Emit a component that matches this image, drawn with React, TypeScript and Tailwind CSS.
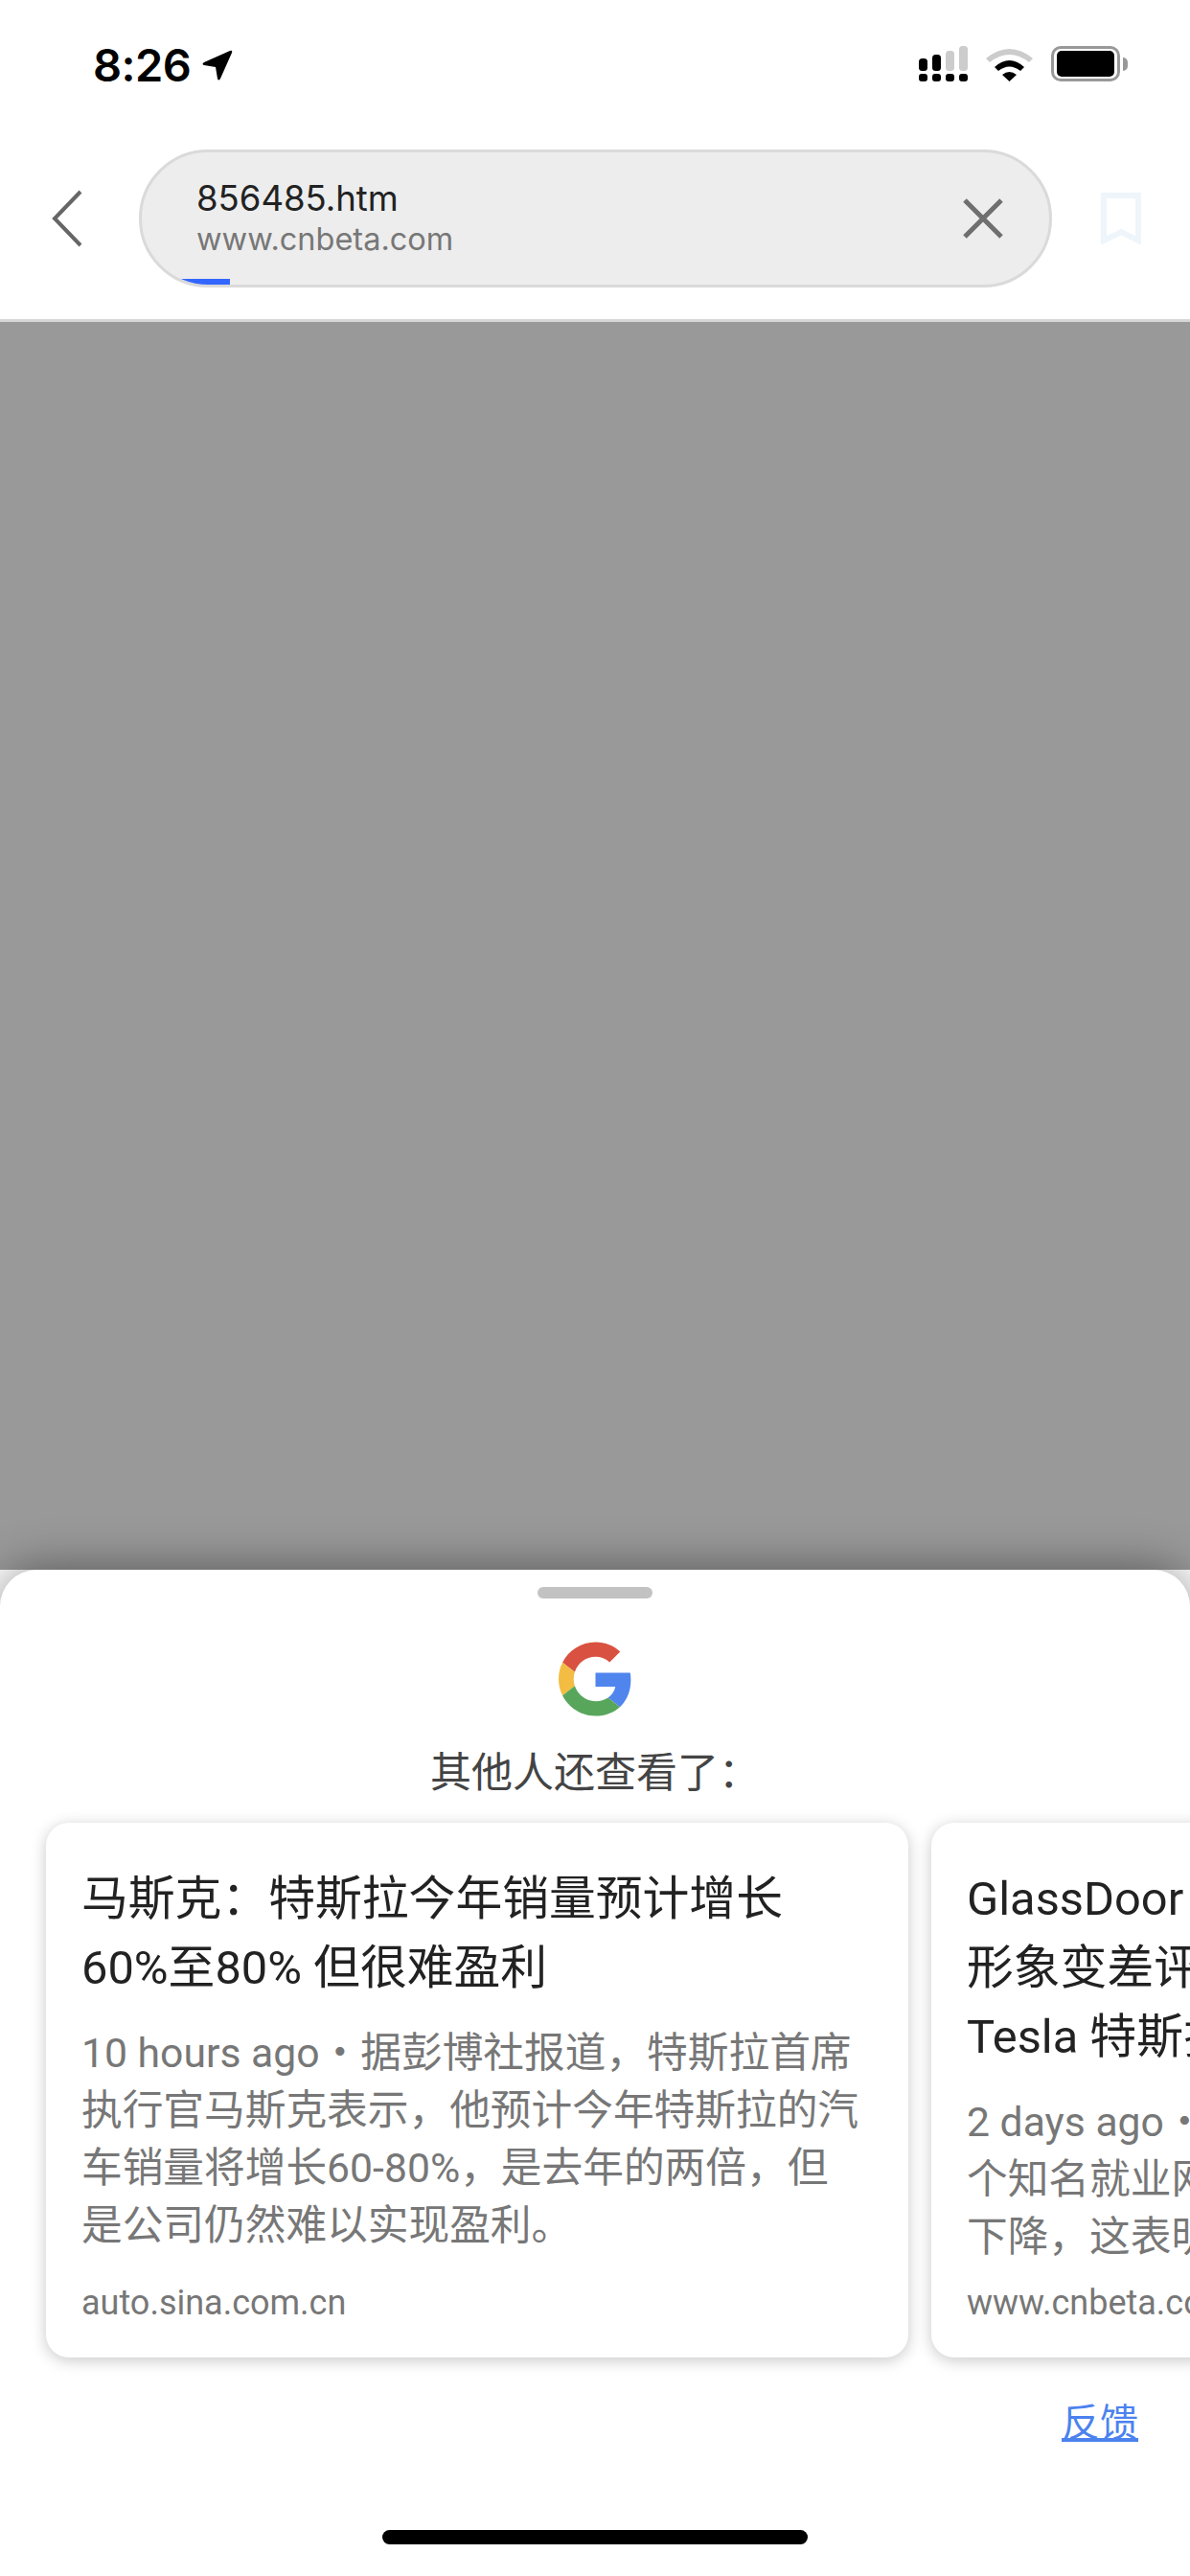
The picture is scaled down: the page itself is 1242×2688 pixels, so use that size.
import React from 'react'

const sansFont = "font-['Inter','Noto_Sans_CJK_SC',sans-serif]"
const cardFont = "font-['Roboto','Noto_Sans_CJK_SC',sans-serif]"

interface Story {
  title: string[]
  body: string[]
  source: string
}

const stories: Story[] = [
  {
    title: ['马斯克：特斯拉今年销量预计增长', '60%至80% 但很难盈利'],
    body: [
      '10 hours ago・据彭博社报道，特斯拉首席',
      '执行官马斯克表示，他预计今年特斯拉的汽',
      '车销量将增长60-80%，是去年的两倍，但',
      '是公司仍然难以实现盈利。',
    ],
    source: 'auto.sina.com.cn',
  },
  {
    title: ['GlassDoor 发布榜单：马斯克', '形象变差评分下滑', 'Tesla 特斯拉跌出前列'],
    body: ['2 days ago・据外媒报道，一', '个知名就业网站的评分', '下降，这表明员工不满'],
    source: 'www.cnbeta.com',
  },
]

const StatusBar = () => (
  <div className="flex h-[100px] items-start justify-between pl-[97px] pr-[65px] pt-[48px]">
    <div className="flex items-center gap-[12px]">
      <span className="text-[47px] leading-[40px] font-semibold tracking-[-0.5px] text-black">8:26</span>
      <svg width="32" height="32" viewBox="0 0 32 32">
        <path d="M29 1 Q32 0 31 3 L19 30 Q17 33 16 30 L14 18 L2 16 Q-1 15 2 13 Z" fill="#000" />
      </svg>
    </div>
    <div className="flex items-center gap-[19px] pl-[4px]">
      <svg width="51" height="37" viewBox="0 0 51 37">
        <rect x="0" y="13" width="9" height="13" rx="3.500" fill="#000" />
        <rect x="14" y="9" width="9" height="17" rx="3.500" fill="#000" />
        <rect x="28" y="5" width="9" height="21" rx="3.500" fill="#ccc" />
        <rect x="42" y="0" width="9" height="26" rx="3.500" fill="#ccc" />
        <rect x="0" y="29" width="9" height="8" rx="3" fill="#000" />
        <rect x="14" y="29" width="9" height="8" rx="3" fill="#000" />
        <rect x="28" y="29" width="9" height="8" rx="3" fill="#000" />
        <rect x="42" y="29" width="9" height="8" rx="3" fill="#000" />
      </svg>
      <svg width="49" height="36" viewBox="0 0 49 36">
        <path d="M0 12 Q24.500 -8 49 12 L45 16 Q24.500 0 4 16 Z" fill="#ccc" />
        <path d="M9 21 Q24.500 7 40 21 L36 25 Q24.500 16 13 25 Z" fill="#000" />
        <path d="M17 29 Q24.500 23 32 29 L24.500 36 Z" fill="#000" />
      </svg>
      <div className="flex items-center gap-[3px]">
        <div className="flex h-[37px] w-[72px] items-center justify-center rounded-[10px] border-[3px] border-[#999]">
          <div className="h-[27px] w-[60px] rounded-[5px] bg-black" />
        </div>
        <div className="h-[14px] w-[5px] rounded-r-full bg-[#999]" />
      </div>
    </div>
  </div>
)

const NavBar = () => (
  <div className="flex h-[236px] items-start border-b-[3px] border-[#d6d6d6] bg-white pt-[56px]">
    <div className="flex h-[144px] w-[145px] shrink-0 items-center pl-[54px]">
      <svg width="32" height="60" viewBox="0 0 32 60" fill="none">
        <path d="M30 2 L3 30 L30 58" stroke="#666" strokeWidth="4" />
      </svg>
    </div>
    <div className="relative flex h-[144px] w-[953px] shrink-0 items-center overflow-hidden rounded-[72px] border-[3px] border-[#dadada] bg-[#ededed] pl-[57px] pr-[47px]">
      <div className="flex-1">
        <div className="text-[36.500px] leading-[44px] text-[#222]">856485.htm</div>
        <div className="text-[32.500px] leading-[42px] text-[#777]">www.cnbeta.com</div>
      </div>
      <svg width="44" height="44" viewBox="0 0 44 44" fill="none">
        <path d="M3 3 L41 41 M41 3 L3 41" stroke="#6f6f6f" strokeWidth="5" />
      </svg>
      <div className="absolute bottom-0 left-0 h-[6px] w-[92px] bg-[#3366ff]" />
    </div>
    <div className="flex h-[144px] flex-1 items-center justify-center">
      <svg width="42" height="54" viewBox="0 0 42 54" fill="none">
        <path d="M3 3 H39 V50 L21 41 L3 50 Z" stroke="#eef5fb" strokeWidth="6" />
      </svg>
    </div>
  </div>
)

const GoogleMark = () => (
  <svg width="77" height="78" viewBox="0 0 48 48">
    <path fill="#d95140" d="M24 9.500c3.540 0 6.710 1.220 9.210 3.600l6.850-6.850C35.900 2.380 30.470 0 24 0 14.620 0 6.510 5.380 2.560 13.220l7.980 6.190C12.430 13.720 17.740 9.500 24 9.500z" />
    <path fill="#5085ee" d="M46.980 24.550c0-1.570-.15-3.090-.38-4.550H24v9.020h12.940c-.58 2.960-2.260 5.480-4.780 7.180l7.730 6c4.510-4.180 7.090-10.360 7.090-17.650z" />
    <path fill="#f2bd42" d="M10.530 28.590c-.48-1.450-.76-2.990-.76-4.590s.27-3.140.76-4.590l-7.980-6.190C.92 16.460 0 20.120 0 24c0 3.880.92 7.540 2.560 10.780l7.970-6.190z" />
    <path fill="#58a65c" d="M24 48c6.480 0 11.930-2.130 15.890-5.810l-7.730-6c-2.150 1.450-4.920 2.300-8.160 2.300-6.260 0-11.570-4.220-13.470-9.910l-7.980 6.190C6.510 42.620 14.620 48 24 48z" />
  </svg>
)

const StoryCard = ({ story }: { story: Story }) => (
  <div className={`flex h-[558px] w-[900px] shrink-0 flex-col rounded-[24px] bg-white px-[37px] pt-[44px] shadow-[0_3px_16px_rgba(0,0,0,0.22)] ${cardFont}`}>
    <div className="text-[48.800px] leading-[72px] whitespace-nowrap text-[#222]">
      {story.title.map((line) => (
        <div key={line}>{line}</div>
      ))}
    </div>
    <div className="mt-[22px] text-[42.700px] leading-[60px] whitespace-nowrap text-[#777]">
      {story.body.map((line) => (
        <div key={line}>{line}</div>
      ))}
    </div>
    <div className="mt-auto pb-[32px] text-[36px] leading-[50px] text-[#777]">{story.source}</div>
  </div>
)

export default function App() {
  return (
    <div className={`flex h-[2688px] w-[1242px] flex-col overflow-hidden bg-white ${sansFont}`}>
      <StatusBar />
      <NavBar />
      <div className="flex-1 bg-[#999]" />
      <div className="relative flex h-[1050px] flex-col items-center rounded-t-[38px] bg-white pt-[18px] shadow-[0_0_50px_rgba(0,0,0,0.45)]">
        <div className="h-[12px] w-[120px] rounded-full bg-[#c2c2c2]" />
        <div className="mt-[45px]">
          <GoogleMark />
        </div>
        <div className="mt-[30px] text-[43px] leading-[56px] text-[#444]">其他人还查看了：</div>
        <div className="mt-[5px] flex w-full gap-[24px] overflow-hidden py-[20px] pl-[48px]">
          {stories.map((story) => (
            <StoryCard key={story.source} story={story} />
          ))}
        </div>
        <div className="mt-[24px] w-full pr-[54px] text-right text-[40px] leading-[48px] text-[#4c82ee] underline">反馈</div>
        <div className="mt-auto mb-[33px] h-[15px] w-[444px] rounded-full bg-black" />
      </div>
    </div>
  )
}
